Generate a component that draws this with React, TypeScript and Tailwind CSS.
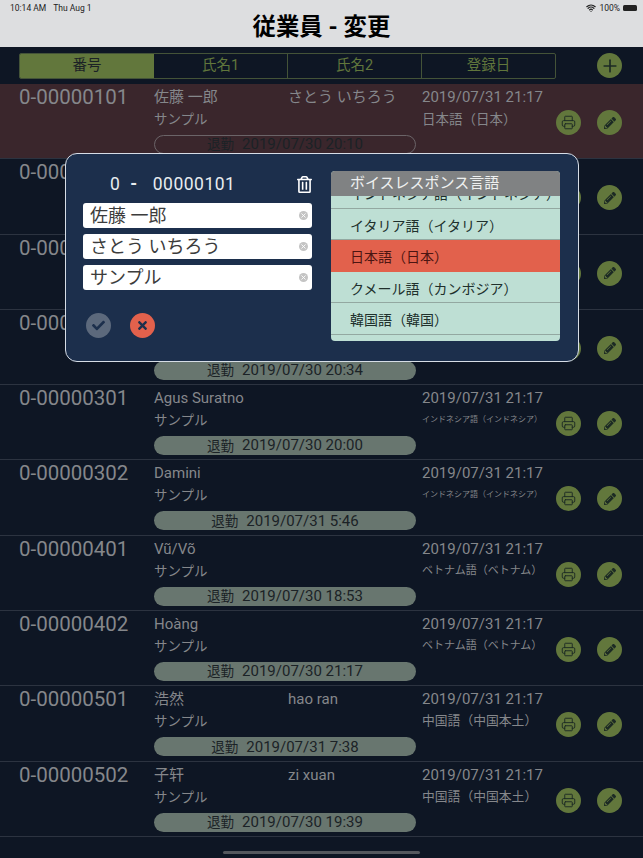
import { Plus, Printer, Wifi, X } from "lucide-react";
import { FaCheck, FaPencilAlt, FaRegTrashAlt, FaTimes } from "react-icons/fa";

const font = { sans: "font-['Roboto','Noto_Sans_CJK_JP',sans-serif]" };

type Row = {
  id: string;
  name: string;
  kana?: string;
  date: string;
  lang: string;
  langSize?: string;
  out: string;
  active?: boolean;
};

const rows: Row[] = [
  { id: "0-00000101", name: "佐藤 一郎", kana: "さとう いちろう", date: "2019/07/31 21:17", lang: "日本語（日本）", langSize: "text-[13.5px]", out: "2019/07/30 20:10", active: true },
  { id: "0-00000102", name: "", date: "", lang: "", out: "" },
  { id: "0-00000201", name: "", date: "", lang: "", out: "" },
  { id: "0-00000202", name: "", date: "", lang: "", out: "2019/07/30 20:34" },
  { id: "0-00000301", name: "Agus Suratno", date: "2019/07/31 21:17", lang: "インドネシア語（インドネシア）", langSize: "text-[8px]", out: "2019/07/30 20:00" },
  { id: "0-00000302", name: "Damini", date: "2019/07/31 21:17", lang: "インドネシア語（インドネシア）", langSize: "text-[8px]", out: "2019/07/31 5:46" },
  { id: "0-00000401", name: "Vũ/Võ", date: "2019/07/31 21:17", lang: "ベトナム語（ベトナム）", langSize: "text-[11px]", out: "2019/07/30 18:53" },
  { id: "0-00000402", name: "Hoàng", date: "2019/07/31 21:17", lang: "ベトナム語（ベトナム）", langSize: "text-[11px]", out: "2019/07/30 21:17" },
  { id: "0-00000501", name: "浩然", kana: "hao ran", date: "2019/07/31 21:17", lang: "中国語（中国本土）", langSize: "text-[12.8px]", out: "2019/07/31 7:38" },
  { id: "0-00000502", name: "子轩", kana: "zi xuan", date: "2019/07/31 21:17", lang: "中国語（中国本土）", langSize: "text-[12.8px]", out: "2019/07/30 19:39" },
];

function RoundButton({ children }: { children: React.ReactNode }) {
  return (
    <div className="flex h-[25px] w-[25px] items-center justify-center rounded-full bg-[#62773c] text-[#1c2a24]">
      {children}
    </div>
  );
}

function EmployeeRow({ row }: { row: Row }) {
  return (
    <div
      className={`relative h-[75.3px] shrink-0 border-b border-[#2c3340] pl-[19px] ${
        row.active ? "bg-[#3a262c]" : ""
      }`}
    >
      <div className="grid grid-cols-[135px_134px_134px_134px] pt-[2px] text-[#85878b]">
        <div className="h-[22px] whitespace-nowrap text-[20.5px] leading-[22px]">{row.id}</div>
        <div className="h-[22px] whitespace-nowrap text-[15px] leading-[22px]">{row.name}</div>
        <div className="h-[22px] whitespace-nowrap text-[15px] leading-[22px]">{row.kana}</div>
        <div className="h-[22px] whitespace-nowrap text-[15px] leading-[22px]">{row.date}</div>
      </div>
      <div className="grid grid-cols-[135px_134px_134px_134px] text-[#85878b]">
        <div />
        <div className="h-[22px] text-[13.5px] leading-[22px]">{row.name || row.out ? "サンプル" : ""}</div>
        <div />
        <div className={`h-[22px] whitespace-nowrap leading-[22px] ${row.langSize}`}>{row.lang}</div>
      </div>
      {row.out && (
        <div className="ml-[135px] mt-[5px] w-[262px]">
          <div
            className={`flex h-[19px] items-center justify-center gap-[8px] rounded-full text-[15px] text-[#1b2226] ${
              row.active ? "border border-[#6b6468]" : "bg-[#68766f]"
            }`}
          >
            <span className="text-[13.5px]">退勤</span>
            <span>{row.out}</span>
          </div>
        </div>
      )}
      <div className="absolute left-[556px] top-[26px] flex gap-4">
        <RoundButton>
          <Printer size={15} strokeWidth={1.5} />
        </RoundButton>
        <RoundButton>
          <FaPencilAlt size={12} />
        </RoundButton>
      </div>
    </div>
  );
}

function NameInput({ value }: { value: string }) {
  return (
    <div className="flex h-[25px] items-center justify-between rounded-[3px] bg-white pl-[7px] pr-[4px] text-[18px] text-[#3c3c3c]">
      <span>{value}</span>
      <div className="flex h-[9px] w-[9px] items-center justify-center rounded-full bg-[#c4c4c4] text-white">
        <X size={7} strokeWidth={3} />
      </div>
    </div>
  );
}

function LangItem({ label, selected }: { label: string; selected?: boolean }) {
  return (
    <div
      className={`flex h-[31.5px] shrink-0 items-center border-b pl-[19px] pt-[5px] text-[14px] ${
        selected
          ? "border-[#e2614c] bg-[#e2614c] text-[#4c1512]"
          : "border-[#93a8a1] text-[#20302c]"
      }`}
    >
      {label}
    </div>
  );
}

function EditDialog() {
  return (
    <div className="absolute left-[65px] top-[153px] flex h-[209px] w-[514px] rounded-[12px] border-[1.5px] border-[#d6dde6] bg-[#1c2f4c]">
      <div className="flex w-[265px] flex-col pl-[17px] pt-[17px]">
        <div className="flex h-[26px] w-[229px] items-center justify-between">
          <div className="flex items-center pl-[27px] text-[17.5px] tracking-[0.5px] text-[#e8ecf0]">
            <span>0</span>
            <span className="ml-[10px] font-bold">-</span>
            <span className="ml-[15px]">00000101</span>
          </div>
          <FaRegTrashAlt size={17} className="mr-[-1px] text-white" />
        </div>
        <div className="mt-[6px] flex w-[229px] flex-col gap-[6px]">
          <NameInput value="佐藤 一郎" />
          <NameInput value="さとう いちろう" />
          <NameInput value="サンプル" />
        </div>
        <div className="ml-[3px] mt-[23px] flex gap-[19px]">
          <div className="flex h-[25px] w-[25px] items-center justify-center rounded-full bg-[#5c697c] text-[#1c2f4c]">
            <FaCheck size={13} />
          </div>
          <div className="flex h-[25px] w-[25px] items-center justify-center rounded-full bg-[#e2614c] text-[#1c2f4c]">
            <FaTimes size={13} />
          </div>
        </div>
      </div>
      <div className="mt-[17px] flex h-[170px] w-[229px] flex-col overflow-hidden rounded-[4px] bg-[#bedfd4]">
        <div className="z-10 flex h-[25px] shrink-0 items-center bg-[#808283] pl-[19px] text-[15px] text-[#eef0f0]">
          ボイスレスポンス言語
        </div>
        <div className="flex flex-col">
          <div className="flex h-[12.5px] shrink-0 items-end overflow-hidden border-b border-[#93a8a1] pl-[19px] text-[14px] leading-[20px] text-[#20302c]">
            <span className="block whitespace-nowrap pb-[4px]">インドネシア語（インドネシア）</span>
          </div>
          <LangItem label="イタリア語（イタリア）" />
          <LangItem label="日本語（日本）" selected />
          <LangItem label="クメール語（カンボジア）" />
          <LangItem label="韓国語（韓国）" />
        </div>
      </div>
    </div>
  );
}

export default function App() {
  return (
    <div className={`relative flex h-[858px] w-[643px] flex-col overflow-hidden bg-[#0e1624] ${font.sans}`}>
      {/* Header */}
      <div className="relative h-[47px] shrink-0 bg-[#dddee0]">
        <div className="flex h-[15px] items-center justify-between pl-[10px] pr-[6px] pt-[1px] text-[8.5px] text-[#222]">
          <div className="flex gap-[7px]">
            <span>10:14 AM</span>
            <span>Thu Aug 1</span>
          </div>
          <div className="flex items-center gap-[3px]">
            <Wifi size={10} strokeWidth={3} />
            <span>100%</span>
            <div className="h-[6px] w-[14px] rounded-[1.5px] bg-[#222]" />
          </div>
        </div>
        <div className="text-center text-[23.4px] font-bold leading-[24px] text-black">従業員 - 変更</div>
      </div>

      {/* Sort tabs */}
      <div className="flex h-[37px] shrink-0 items-start pl-[19px] pt-[6px]">
        <div className="flex h-[26px] w-[537px] overflow-hidden rounded-[2px] border border-[#445338] text-[14.5px] text-[#61763c]">
          <div className="flex w-[134px] items-center justify-center bg-[#62773c] text-[#1b2226]">番号</div>
          <div className="flex w-[134px] items-center justify-center border-r border-[#445338]">氏名1</div>
          <div className="flex w-[134px] items-center justify-center border-r border-[#445338]">氏名2</div>
          <div className="flex flex-1 items-center justify-center">登録日</div>
        </div>
        <div className="ml-[41px]">
          <RoundButton>
            <Plus size={20} strokeWidth={2} />
          </RoundButton>
        </div>
      </div>

      {/* List */}
      <div className="flex flex-col">
        {rows.map((row) => (
          <EmployeeRow key={row.id} row={row} />
        ))}
      </div>

      <EditDialog />

      {/* Home indicator */}
      <div className="absolute bottom-[4px] left-[223px] h-[3px] w-[197px] rounded-full bg-[#55585e]" />
    </div>
  );
}
